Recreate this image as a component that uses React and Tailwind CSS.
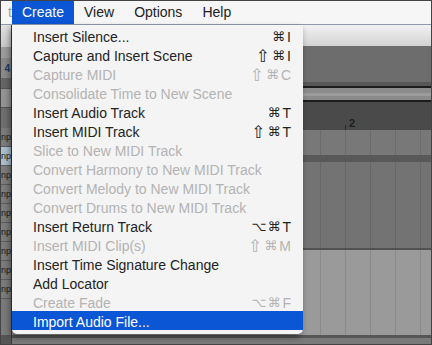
const items = [
  { label: 'Insert Silence...', keys: ['⌘', 'I'] },
  { label: 'Capture and Insert Scene', keys: ['⇧', '⌘', 'I'] },
  { label: 'Capture MIDI', keys: ['⇧', '⌘', 'C'], off: true },
  { label: 'Consolidate Time to New Scene', off: true },
  { label: 'Insert Audio Track', keys: ['⌘', 'T'] },
  { label: 'Insert MIDI Track', keys: ['⇧', '⌘', 'T'] },
  { label: 'Slice to New MIDI Track', off: true },
  { label: 'Convert Harmony to New MIDI Track', off: true },
  { label: 'Convert Melody to New MIDI Track', off: true },
  { label: 'Convert Drums to New MIDI Track', off: true },
  { label: 'Insert Return Track', keys: ['⌥', '⌘', 'T'] },
  { label: 'Insert MIDI Clip(s)', keys: ['⇧', '⌘', 'M'], off: true },
  { label: 'Insert Time Signature Change' },
  { label: 'Add Locator' },
  { label: 'Create Fade', keys: ['⌥', '⌘', 'F'], off: true },
  { label: 'Import Audio File...', active: true },
]

const menus = ['Create', 'View', 'Options', 'Help']

function GridRow({ className }) {
  return (
    <div className={`flex ${className}`}>
      <div className="w-[308px] shrink-0" />
      {[0, 1, 2, 3, 4].map(i => (
        <div key={i} className="w-[25px] shrink-0 border-l border-black/10" />
      ))}
    </div>
  )
}

function LeftStrip() {
  return (
    <div className="w-[11px] shrink-0 flex flex-col overflow-hidden border-r border-[#3a3a3a]">
      <div className="h-[22px] bg-gradient-to-b from-[#e2e2e2] to-[#c8c8c8]" />
      <div className="h-[11px] bg-[#9c9c9c]" />
      <div className="h-[20px] bg-[#8a8a8a] flex items-center justify-end pr-[1px] text-[10px] font-bold text-[#1d3a66]">4</div>
      <div className="h-[10px] bg-[#666]" />
      <div className="h-[20px] bg-[#949494] border-y border-[#555]" />
      <div className="h-[20px] bg-[#6e6e6e]" />
      {[0, 1, 2, 3, 4, 5, 6, 7, 8].map(i => (
        <div
          key={i}
          className={`h-[19px] flex items-center justify-end text-[9px] leading-none text-[#1a1a1a] border-b border-[#5c5c5c] ${i === 1 ? 'bg-[#a9bfcc]' : 'bg-[#7c7c7c]'}`}
        >
          np
        </div>
      ))}
      <div className="h-[36px] bg-[#7a7a7a]" />
      <div className="flex-1 bg-[#555]" />
    </div>
  )
}

function Workspace() {
  return (
    <div className="flex-1 flex flex-col">
      <div className="h-[21px] bg-gradient-to-b from-[#f2f2f2] to-[#d2d2d2]" />
      <div className="h-[36px] bg-[#6d6d6d]" />
      <div className="h-[4px] bg-[#575757]" />
      <div className="h-[2px] bg-[#1c1c1c]" />
      <div className="h-[12px] bg-[#8b8b8b] flex flex-col justify-center">
        <div className="h-[3px] bg-[#9c9c9c]" />
      </div>
      <div className="h-[2px] bg-[#1c1c1c]" />
      <div className="h-[28px] bg-[#4a4a4a] flex items-end">
        <div className="w-[333px] shrink-0" />
        <div className="w-px h-[5px] bg-[#2a2a2a]" />
        <span className="ml-[3px] text-[11px] leading-[14px] font-bold text-[#1e1e1e]">2</span>
      </div>
      <GridRow className="h-[25px] bg-[#787878]" />
      <div className="h-[7px] bg-[#595959]" />
      <GridRow className="h-[86px] bg-[#737373]" />
      <div className="h-[2px] bg-[#525252]" />
      <GridRow className="h-[85px] bg-[#9a9a9a]" />
      <div className="h-[3px] bg-[#565656]" />
      <div className="flex-1 bg-[#7a7a7a]" />
    </div>
  )
}

export default function App() {
  return (
    <div className="relative w-[432px] h-[345px] overflow-hidden border border-[#444] bg-[#777] font-['Liberation_Sans','DejaVu_Sans',sans-serif] text-[14px]">
      <div className="h-[24px] flex bg-[#f6f6f6] border-b border-[#8d9aab]">
        <div className="w-[11px] overflow-hidden text-[#9a9a9a] flex justify-end items-center">t</div>
        {menus.map((m, i) => (
          <div
            key={m}
            className={`h-[23px] px-[10px] flex items-center ${i === 0 ? 'bg-[#0b56d4] text-white' : 'text-[#222]'}`}
          >
            {m}
          </div>
        ))}
      </div>

      <div className="flex h-[319px]">
        <LeftStrip />
        <Workspace />
      </div>

      {/* dropdown */}
      <div className="absolute left-[11px] top-[24px] w-[291px] pt-px pb-[4px] bg-[#f4f4f4] rounded-b-[5px] shadow-[-2px_3px_6px_rgba(0,0,0,0.45)]">
        {items.map(item => (
          <div
            key={item.label}
            className={`h-[19px] pl-[21px] pr-[12px] flex items-center justify-between leading-none pt-[2px] ${
              item.active ? 'bg-[#0b56d4] text-white' : item.off ? 'text-[#b3b3b3]' : 'text-[#232323]'
            }`}
          >
            <span>{item.label}</span>
            {item.keys && (
              <span className="flex items-center">
                {item.keys.map((k, i) =>
                  /[A-Z]/.test(k) ? (
                    <span key={i} className="ml-[2px] text-[14px]">{k}</span>
                  ) : k === '⇧' ? (
                    <span key={i} className="mr-[1px] font-['DejaVu_Sans',sans-serif] text-[17px] leading-[14px]">{k}</span>
                  ) : (
                    <span key={i} className="ml-[1px] font-['DejaVu_Sans',sans-serif] text-[13px]">{k}</span>
                  )
                )}
              </span>
            )}
          </div>
        ))}
      </div>
    </div>
  )
}
